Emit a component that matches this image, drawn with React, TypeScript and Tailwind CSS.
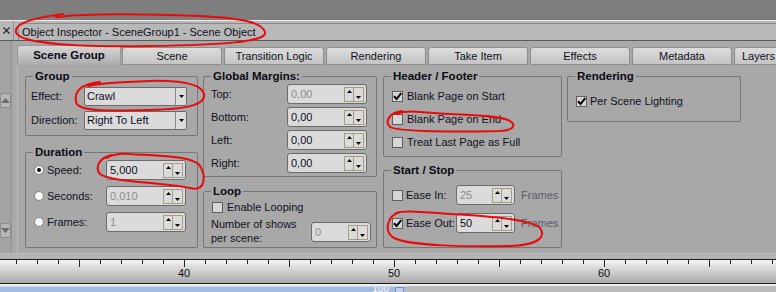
import React from 'react';

function Up() {
  return (
    <svg width="5" height="3" viewBox="0 0 5 3" className="block">
      <path d="M0 3L2.5 0L5 3Z" fill="#000" />
    </svg>
  );
}
function Down() {
  return (
    <svg width="5" height="3" viewBox="0 0 5 3" className="block">
      <path d="M0 0L2.5 3L5 0Z" fill="#000" />
    </svg>
  );
}

function Spin({ value, disabled, wc }: { value: string; disabled?: boolean; wc: string }) {
  return (
    <div className={`${wc} flex h-[20px] shrink-0 items-center rounded-[3px] border border-[#6b6b6b] bg-[#dbdbdb] pl-[3px] pr-[2px]`}>
      <span className={`flex-1 leading-none ${disabled ? 'text-[#8d8d8d]' : 'text-[#0b0b1c]'}`}>{value}</span>
      <div className="flex h-[15px] border border-[#a69b85]">
        <div className="flex w-[9px] justify-center border-r border-[#a69b85] pt-[2px]">
          <Up />
        </div>
        <div className="flex w-[9px] flex-col items-center justify-end pb-[2px]">
          <Down />
        </div>
      </div>
    </div>
  );
}

function Drop({ value }: { value: string }) {
  return (
    <div className="flex h-[19px] w-[103px] shrink-0 items-stretch rounded-[2px] border border-[#6b6b6b] bg-[#dbdbdb]">
      <span className="flex flex-1 items-center pl-[2px] text-[#0b0b1c]">{value}</span>
      <div className="flex w-[11px] items-center justify-center border-l border-[#8a8a8a]">
        <Down />
      </div>
    </div>
  );
}

function Check({ checked }: { checked?: boolean }) {
  return (
    <div className="flex h-[11px] w-[11px] shrink-0 items-center justify-center border border-[#5f5f5f] bg-[#d6d6d6]">
      {checked && (
        <svg width="9" height="9" viewBox="0 0 9 9" className="block">
          <path d="M1 4.2 L3.6 7 L8.2 1.2" fill="none" stroke="#000" strokeWidth="2" />
        </svg>
      )}
    </div>
  );
}

function Radio({ on }: { on?: boolean }) {
  return (
    <div className="flex h-[10px] w-[10px] shrink-0 items-center justify-center rounded-full border border-[#858585] bg-[#f7f7f7]">
      {on && <div className="h-[4px] w-[4px] rounded-full bg-black" />}
    </div>
  );
}

function Box({ title, className = '', children }: { title: string; className?: string; children: React.ReactNode }) {
  return (
    <fieldset className={`rounded-[2px] border border-[#767676] ${className}`}>
      <legend className="ml-[7px] px-[2px] text-[11.5px] font-bold leading-[14px] text-[#0b0b14]">{title}</legend>
      {children}
    </fieldset>
  );
}

const tabs = ['Scene', 'Transition Logic', 'Rendering', 'Take Item', 'Effects', 'Metadata'];

function Ruler() {
  const ticks: number[] = [];
  for (let n = 32; n <= 69; n++) ticks.push(n);
  return (
    <div className="h-[25px] border-y border-[#1c1c1c] bg-linear-to-b from-[#f4f4f4] to-[#aaaaaa]">
      <svg width="776" height="23" className="block">
        {ticks.map((n) => {
          const x = 184.5 + 21 * (n - 40);
          const tall = n % 5 === 0;
          return <line key={n} x1={x} x2={x} y1={0} y2={tall ? 7 : 4} stroke="#222" strokeWidth="1" />;
        })}
        {[40, 50, 60].map((n) => (
          <text
            key={n}
            x={184 + 21 * (n - 40)}
            y={17}
            textAnchor="middle"
            fontSize="11"
            fontFamily="Liberation Sans, Arial, sans-serif"
            fill="#111"
          >
            {n}
          </text>
        ))}
      </svg>
    </div>
  );
}

function Marks() {
  return (
    <svg width="776" height="292" className="pointer-events-none absolute left-0 top-0">
      <g fill="none" stroke="#ea0a0a" strokeWidth="2" strokeLinecap="round">
        <path d="M63 14 C40 17, 14 22, 16 32 C18 44, 80 47, 150 46 C220 45, 268 42, 265 32 C262 22, 240 18, 200 16 C150 14, 90 13, 56 17" />
        <path d="M100 82 C80 84, 74 92, 76 102 C78 112, 110 111, 150 110 C190 109, 206 104, 204 94 C202 84, 180 80, 150 81 C120 82, 100 83, 88 86" />
        <path d="M112 155 C98 158, 95 168, 100 174 C110 182, 160 182, 190 188 C206 192, 206 176, 200 166 C194 156, 160 156, 130 154 C120 153, 112 155, 106 158" />
        <path d="M402 111 C388 113, 385 122, 390 127 C398 132, 460 132, 500 131 C516 130, 516 124, 508 120 C494 114, 450 115, 420 112 C410 111, 402 112, 396 114" />
        <path d="M400 212 C386 216, 384 232, 394 238 C410 246, 470 247, 510 246 C540 245, 546 236, 540 228 C532 220, 490 216, 450 214 C420 212, 405 210, 396 213" />
      </g>
    </svg>
  );
}

export default function App() {
  return (
    <div className="relative h-[292px] w-[776px] overflow-hidden bg-[#7e7e7e] font-['Liberation_Sans',Arial,sans-serif] text-[11px] text-[#111120]">
      <div className="h-[20px]" />
      {/* title bar */}
      <div className="flex h-[21px] border-t border-b border-t-[#ececec] border-b-[#5c5c5c] bg-[#b8b8b8]">
        <div className="flex w-[14px] items-center justify-center border-r border-[#8e8e8e]">
          <svg width="7" height="7" viewBox="0 0 7 7" className="block">
            <path d="M0.5 0.5 L6.5 6.5 M6.5 0.5 L0.5 6.5" stroke="#222" strokeWidth="1.1" />
          </svg>
        </div>
        <div className="ml-[4px] mt-[2px] flex flex-1 items-center rounded-tl-[2px] border-l border-t border-[#8a8a8a] pl-[3px] text-[#101018]">
          Object Inspector - SceneGroup1 - Scene Object
        </div>
      </div>
      {/* body */}
      <div className="flex h-[212px]">
        <div className="flex w-[14px] flex-col border-r border-[#939393] bg-[#a3a3a3]">
          <div className="mt-[52px] flex h-[15px] items-center justify-center rounded-[2px] border border-[#8c8c8c] bg-[#b7b7b7]">
            <svg width="9" height="5" viewBox="0 0 9 5" className="block">
              <path d="M0 5L4.5 0L9 5Z" fill="#6e6e6e" />
            </svg>
          </div>
          <div className="mt-[115px] flex h-[15px] items-center justify-center rounded-[2px] border border-[#8c8c8c] bg-[#b7b7b7]">
            <svg width="9" height="5" viewBox="0 0 9 5" className="block">
              <path d="M0 0L4.5 5L9 0Z" fill="#6e6e6e" />
            </svg>
          </div>
        </div>
        <div className="flex flex-1 flex-col bg-[#a9a9a9] pl-[5px]">
          {/* tabs */}
          <div className="flex h-[24px] items-end">
            <div className="flex h-[20px] w-[104px] shrink-0 items-center justify-center rounded-t-[3px] border border-b-0 border-[#979797] bg-linear-to-b from-[#d6d6d6] to-[#acacac] text-[11.5px] font-bold text-[#0b0b14]">
              Scene Group
            </div>
            {tabs.map((t, i) => (
              <div
                key={t}
                className={`${i === 0 ? 'ml-[1px]' : 'ml-[2px]'} flex h-[18px] w-[100px] shrink-0 items-center justify-center rounded-t-[3px] border border-[#8e8e8e] bg-linear-to-b from-[#dcdcdc] to-[#c4c4c4] text-[#101018]`}
              >
                {t}
              </div>
            ))}
            <div className="ml-[2px] flex h-[18px] w-[100px] shrink-0 items-center rounded-t-[3px] border border-[#8e8e8e] bg-linear-to-b from-[#dcdcdc] to-[#c4c4c4] pl-[7px] text-[#101018]">
              Layers
            </div>
          </div>
          {/* panel */}
          <div className="flex h-[188px] items-start border-l border-[#bdbdbd] bg-[#a8a8a8] pl-[7px] pt-[4px]">
            {/* col 1 */}
            <div className="flex w-[173px] shrink-0 flex-col">
              <Box title="Group">
                <div className="flex flex-col gap-[5px] pb-[5px] pl-[5px] pt-[4px]">
                  <div className="flex items-center">
                    <span className="w-[53px]">Effect:</span>
                    <Drop value="Crawl" />
                  </div>
                  <div className="flex items-center">
                    <span className="w-[53px]">Direction:</span>
                    <Drop value="Right To Left" />
                  </div>
                </div>
              </Box>
              <Box title="Duration" className="mt-[9px]">
                <div className="flex flex-col gap-[6px] pb-[15px] pl-[8px] pt-[1px]">
                  <div className="flex items-center">
                    <Radio on />
                    <span className="ml-[3px] w-[59px]">Speed:</span>
                    <Spin value="5,000" wc="w-[80px]" />
                  </div>
                  <div className="flex items-center">
                    <Radio />
                    <span className="ml-[3px] w-[59px]">Seconds:</span>
                    <Spin value="0,010" disabled wc="w-[80px]" />
                  </div>
                  <div className="flex items-center">
                    <Radio />
                    <span className="ml-[3px] w-[59px]">Frames:</span>
                    <Spin value="1" disabled wc="w-[80px]" />
                  </div>
                </div>
              </Box>
            </div>
            {/* col 2 */}
            <div className="ml-[5px] flex w-[174px] shrink-0 flex-col">
              <Box title="Global Margins:">
                <div className="flex flex-col gap-[3px] pb-[3px] pl-[7px] pt-[1px]">
                  <div className="flex items-center">
                    <span className="w-[76px]">Top:</span>
                    <Spin value="0,00" disabled wc="w-[80px]" />
                  </div>
                  <div className="flex items-center">
                    <span className="w-[76px]">Bottom:</span>
                    <Spin value="0,00" wc="w-[80px]" />
                  </div>
                  <div className="flex items-center">
                    <span className="w-[76px]">Left:</span>
                    <Spin value="0,00" wc="w-[80px]" />
                  </div>
                  <div className="flex items-center">
                    <span className="w-[76px]">Right:</span>
                    <Spin value="0,00" wc="w-[80px]" />
                  </div>
                </div>
              </Box>
              <Box title="Loop" className="mt-[7px]">
                <div className="flex flex-col pb-[2px] pl-[7px] pt-[2px]">
                  <div className="flex h-[14px] items-center pl-[1px]">
                    <Check />
                    <span className="ml-[4px]">Enable Looping</span>
                  </div>
                  <div className="mt-[3px] flex items-start">
                    <span className="w-[100px] leading-[14px]">
                      Number of shows
                      <br />
                      per scene:
                    </span>
                    <div className="mt-[5px]">
                      <Spin value="0" disabled wc="w-[60px]" />
                    </div>
                  </div>
                </div>
              </Box>
            </div>
            {/* col 3 */}
            <div className="ml-[6px] flex w-[179px] shrink-0 flex-col">
              <Box title="Header / Footer">
                <div className="flex flex-col gap-[9px] pb-[7px] pl-[8px] pt-[6px]">
                  <div className="flex h-[14px] items-center">
                    <Check checked />
                    <span className="ml-[4px]">Blank Page on Start</span>
                  </div>
                  <div className="flex h-[14px] items-center">
                    <Check />
                    <span className="ml-[4px]">Blank Page on End</span>
                  </div>
                  <div className="flex h-[14px] items-center">
                    <Check />
                    <span className="ml-[4px]">Treat Last Page as Full</span>
                  </div>
                </div>
              </Box>
              <Box title="Start / Stop" className="mt-[6px]">
                <div className="flex flex-col gap-[8px] pb-[14px] pl-[8px] pt-[8px]">
                  <div className="flex items-center">
                    <Check />
                    <span className="ml-[3px] w-[50px]">Ease In:</span>
                    <Spin value="25" disabled wc="w-[59px]" />
                    <span className="ml-[6px] text-[#5a5a66]">Frames</span>
                  </div>
                  <div className="flex items-center">
                    <Check checked />
                    <span className="ml-[3px] w-[50px]">Ease Out:</span>
                    <Spin value="50" wc="w-[59px]" />
                    <span className="ml-[6px] text-[#5a5a66]">Frames</span>
                  </div>
                </div>
              </Box>
            </div>
            {/* col 4 */}
            <div className="ml-[5px] flex w-[174px] shrink-0 flex-col">
              <Box title="Rendering">
                <div className="flex flex-col pb-[13px] pl-[8px] pt-[11px]">
                  <div className="flex h-[14px] items-center">
                    <Check checked />
                    <span className="ml-[3px]">Per Scene Lighting</span>
                  </div>
                </div>
              </Box>
            </div>
          </div>
        </div>
      </div>
      <div className="h-[6px] border-t border-[#bdbdbd] bg-[#b3b3b3]" />
      <Ruler />
      <div className="h-[2px] bg-[#eeeeee]" />
      <div className="flex h-[6px]">
        <div className="flex w-[406px] items-start justify-end overflow-hidden border-t border-[#c9d5ee] bg-[#a5badf] pr-[2px]">
          <span className="mr-[6px] -mt-[4px] text-[10px] leading-[12px] text-white">100</span>
          <div className="h-[8px] w-[9px] border border-[#7d8fb8] bg-[#c3cfe8]" />
        </div>
        <div className="flex-1 bg-[#bcbcbc]" />
      </div>
      <Marks />
    </div>
  );
}
